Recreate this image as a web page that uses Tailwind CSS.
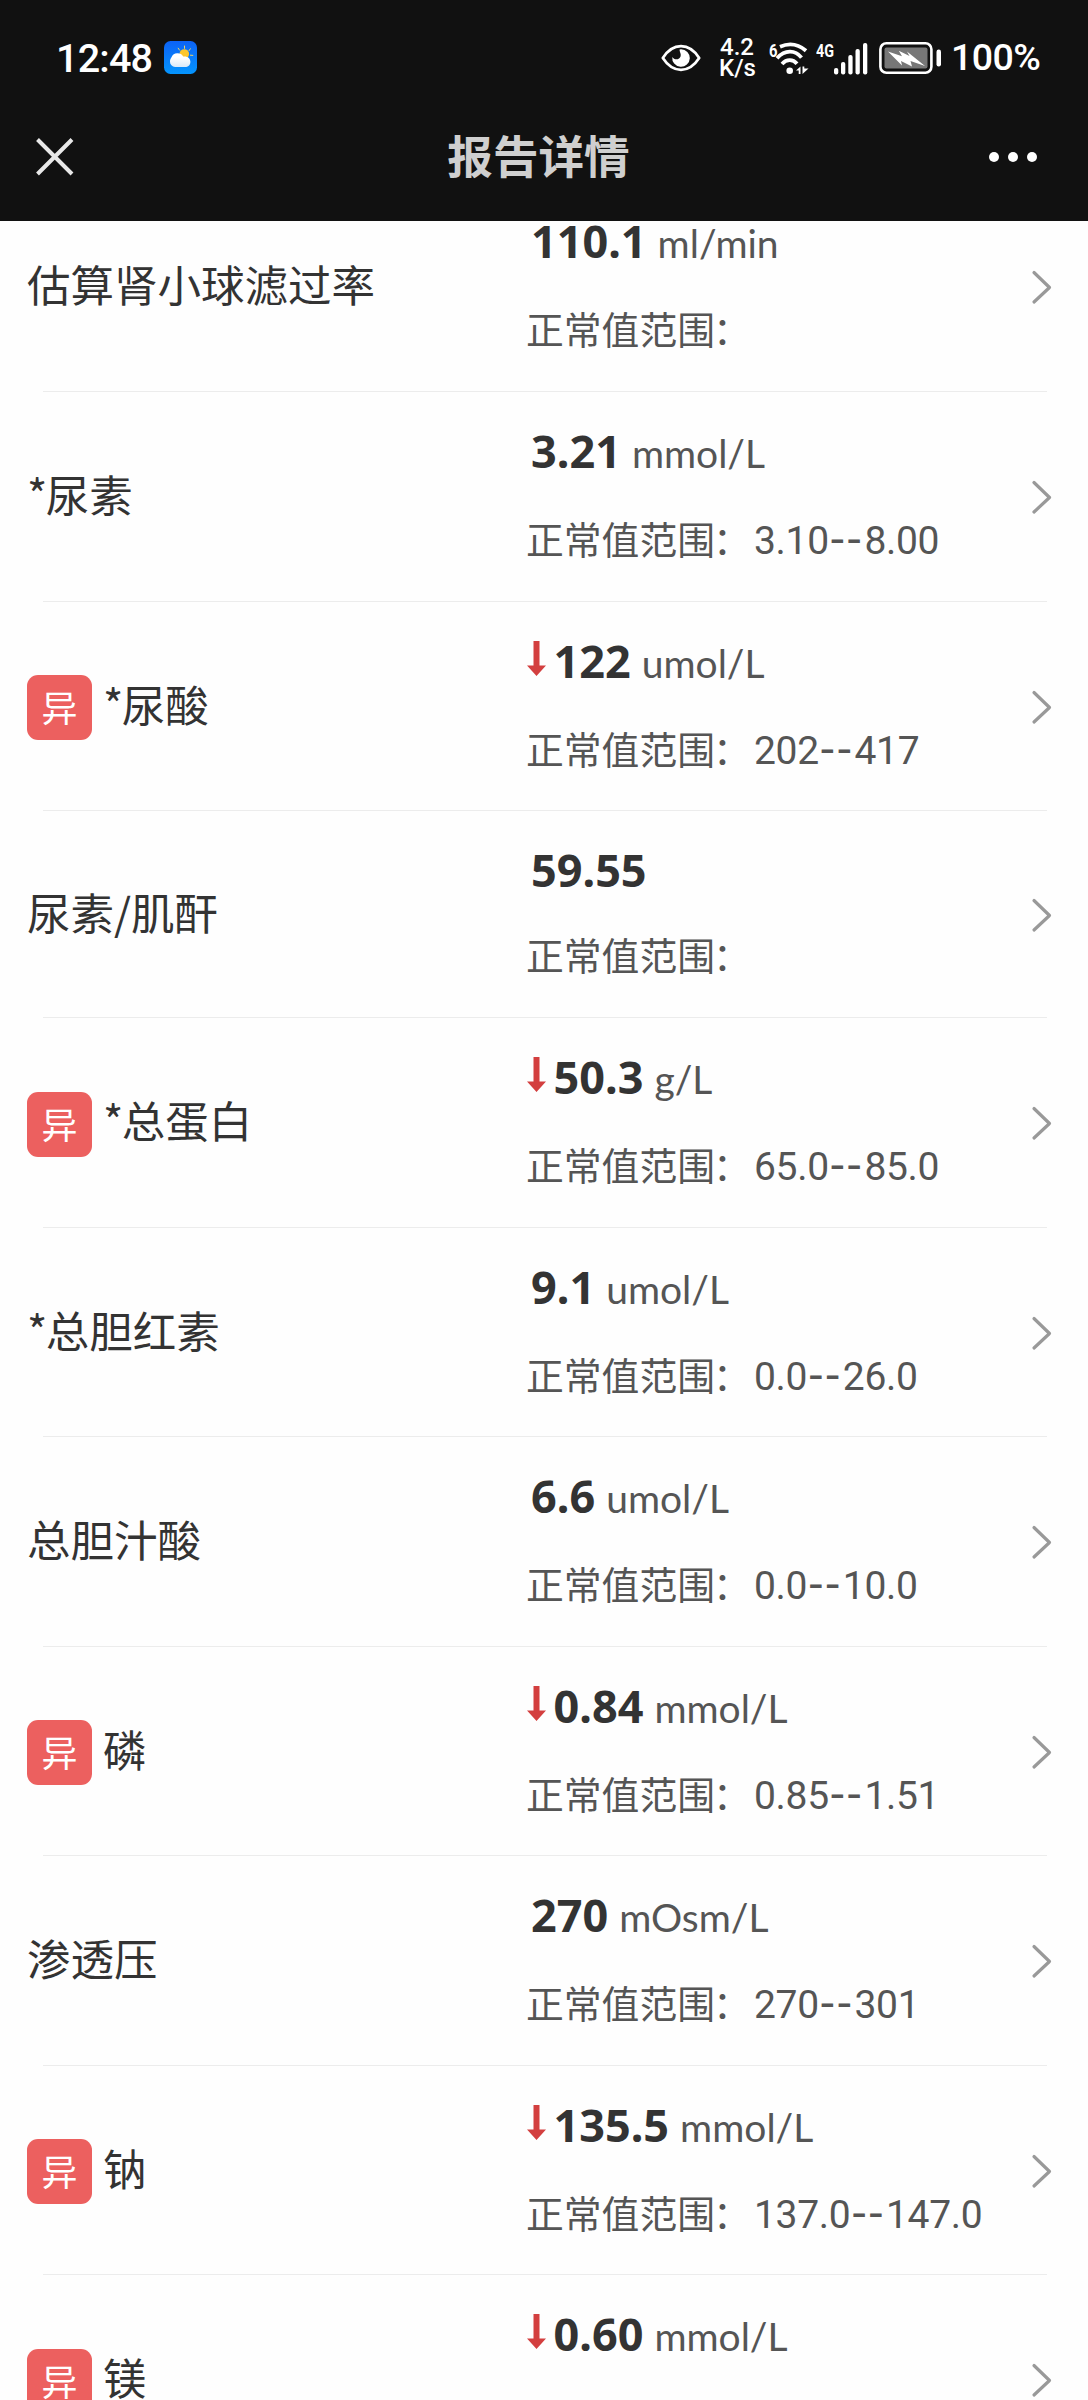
<!DOCTYPE html>
<html lang="zh-CN">
<head>
<meta charset="utf-8">
<title>报告详情</title>
<script src="https://cdn.jsdelivr.net/npm/@tailwindcss/browser@4"></script>
</head>
<body class="w-[1088px] h-[2400px] overflow-hidden bg-[#fefefe] flex flex-col font-['Roboto','Noto_Sans_CJK_SC',sans-serif]">
<header class="h-[221px] shrink-0 bg-[#111111] flex flex-col text-white">
  <div class="h-[114px] shrink-0 flex items-center pl-[56px] pr-[48px] pt-px">
    <span class="w-[108px] pt-[2px] text-[39.5px] leading-none font-medium tracking-[-0.8px] whitespace-nowrap">12:48</span>
    <svg class="w-[33px] h-[33px]" viewBox="0 0 33 33">
      <defs>
        <linearGradient id="sky" x1="0" y1="0" x2="0" y2="1"><stop offset="0" stop-color="#0c62f5"/><stop offset="1" stop-color="#0495fe"/></linearGradient>
        <linearGradient id="cloud" x1="0" y1="0" x2="0" y2="1"><stop offset="0.3" stop-color="#ffffff"/><stop offset="1" stop-color="#d9e9f8"/></linearGradient>
      </defs>
      <rect width="33" height="33" rx="6.5" fill="url(#sky)"/>
      <circle cx="20.3" cy="13" r="4.8" fill="#fcc62c"/>
      <path d="M20.5 5v2.4M14.2 7.2l1.3 1.9M26.3 7.8l-1.2 1.8M28.8 14.4l-2.4-.2" stroke="#e9d36c" stroke-width="1" stroke-linecap="round"/>
      <path d="M11 26a5.2 5.2 0 0 1-5-5.3c0-2 .6-3.400 1.500-4.500A6.600 6.600 0 0 1 19.200 15.500c4.300-.6 7.200 1.800 7.200 5.200S24 26 21.200 26z" fill="url(#cloud)"/>
    </svg>
    <div class="ml-auto flex items-center">
      <svg class="w-[40px] h-[28px]" viewBox="0 0 40 28" fill="none">
        <path d="M1.800 14C7 6 13 2.200 20 2.200S33 6 38.200 14C33 22 27 25.800 20 25.800S7 22 1.800 14z" stroke="#fff" stroke-width="2.700" stroke-linejoin="round"/>
        <path d="M20 5.200a8.800 8.800 0 1 1-8.700 7.700c1 1.700 2.600 2.500 4.300 2.400 3.100-.2 4.700-2.900 3.900-5.900-.4-1.500-1-2.700-.9-4z" fill="#fff"/>
      </svg>
      <div class="ml-[18px] w-[36px] flex flex-col text-[24px] leading-[21px] font-medium">
        <span class="pl-px">4.2</span><span>K/s</span>
      </div>
      <svg class="ml-[14px] w-[42px] h-[36px]" viewBox="0 0 42 36" fill="none">
        <text x="0" y="16.500" font-size="19" font-weight="700" fill="#fff" textLength="8.500" lengthAdjust="spacingAndGlyphs">6</text>
        <g stroke="#fff" stroke-width="3.800" stroke-linecap="butt">
          <path d="M11 6.800C20 2.800 29 4 37 10.800"/>
          <path d="M8 18.200C16 9.600 26 9.600 32.500 17.600"/>
          <path d="M13 24C17.500 19 24 19 28 23.800"/>
        </g>
        <circle cx="20.700" cy="30.800" r="3.300" fill="#fff"/>
        <path d="M27 30.500l4.500-4v7.500h-1.800v-3.500zM33.500 26.500v7.500l6-5.500h-4.200v-2z" fill="#fff"/>
      </svg>
      <svg class="ml-[5px] w-[54px] h-[36px]" viewBox="0 0 54 36" fill="#fff">
        <text x="0" y="17" font-size="19" font-weight="700" textLength="18" lengthAdjust="spacingAndGlyphs">4G</text>
        <rect x="18" y="28" width="4.300" height="6.500" rx="2"/>
        <rect x="25" y="22" width="4.300" height="12.500" rx="2"/>
        <rect x="32.300" y="15" width="4.300" height="19.500" rx="2"/>
        <rect x="39.500" y="9" width="4.300" height="25.500" rx="2"/>
        <rect x="47" y="3" width="4.300" height="31.500" rx="2"/>
      </svg>
      <svg class="ml-[9px] w-[64px] h-[34px]" viewBox="0 0 64 34" fill="none">
        <rect x="1.400" y="2.200" width="51" height="29.600" rx="6" stroke="#fff" stroke-width="2.600"/>
        <rect x="5.500" y="6.500" width="43" height="21" rx="2" fill="#777"/>
        <path d="M9 10.500l14 4.800-3.200-5.600L30.500 15l-2.500-4.500 18 14.500-14.500-5 1.500 5.500-11-5.500 1 4.500z" fill="#fff"/>
        <rect x="57.500" y="8.500" width="4.500" height="17" rx="2.200" fill="#fff"/>
      </svg>
      <span class="ml-[8px] w-[89px] pt-px text-[37.500px] leading-none font-medium tracking-[-0.600px] whitespace-nowrap">100%</span>
    </div>
  </div>
  <div class="h-[85px] shrink-0 grid grid-cols-[1fr_auto_1fr] items-center px-[34px]">
    <svg class="w-[42px] h-[42px]" viewBox="0 0 42 42"><path d="M3.500 3.500L38 38M38 3.500L3.500 38" stroke="#e8e8e8" stroke-width="4"/></svg>
    <h1 class="pt-[4px] pr-[11px] text-[45.600px] leading-[60px] font-bold text-[#cfcfcf]">报告详情</h1>
    <div class="flex justify-end gap-[9px] pr-[17px]">
      <i class="w-[10px] h-[10px] rounded-full bg-white"></i><i class="w-[10px] h-[10px] rounded-full bg-white"></i><i class="w-[10px] h-[10px] rounded-full bg-white"></i>
    </div>
  </div>
</header>
<main class="flex-1 min-h-0 overflow-hidden">
  <ul id="list" class="-mt-[39px] flex flex-col"></ul>
</main>
<script>
// name, value, unit, range, row height, abnormal (low)
const items = [
  ['估算肾小球滤过率', '110.1', 'ml/min', '', 210, false],
  ['*尿素', '3.21', 'mmol/L', '3.10--8.00', 210, false],
  ['*尿酸', '122', 'umol/L', '202--417', 209, true],
  ['尿素/肌酐', '59.55', '', '', 207, false],
  ['*总蛋白', '50.3', 'g/L', '65.0--85.0', 210, true],
  ['*总胆红素', '9.1', 'umol/L', '0.0--26.0', 209, false],
  ['总胆汁酸', '6.6', 'umol/L', '0.0--10.0', 210, false],
  ['磷', '0.84', 'mmol/L', '0.85--1.51', 209, true],
  ['渗透压', '270', 'mOsm/L', '270--301', 210, false],
  ['钠', '135.5', 'mmol/L', '137.0--147.0', 209, true],
  ['镁', '0.60', 'mmol/L', '0.61--1.08', 210, true],
];
const badge = '<span class="w-[65px] h-[65px] mr-[11px] mt-[2px] shrink-0 rounded-[11px] bg-[#ec605f] text-white text-[36px] leading-[62px] text-center font-[\'Noto_Sans_CJK_SC\']">异</span>';
const arrow = '<svg class="w-[19px] h-[35px] mr-[8px] self-start mt-[7px]" viewBox="0 0 19 35"><path d="M6.500 0h6v24.500H19L9.500 35 0 24.500h6.500z" fill="#d33f3f"/></svg>';
document.getElementById('list').innerHTML = items.map(([name, val, unit, range, h, low]) => `
  <li class="relative shrink-0 flex items-center" style="height:${h}px">
    <div class="w-[526px] shrink-0 flex items-center pl-[27px]">
      ${low ? badge : ''}<span class="pb-[6px] text-[43.500px] leading-[60px] text-[#333] font-['Noto_Sans_CJK_SC'] whitespace-nowrap">${name.replace('*', '<span class="tracking-[-1.5px]">*</span>')}</span>
    </div>
    <div class="h-full flex-1 flex flex-col pt-[32px]">
      <div class="${unit ? 'h-[87px]' : 'h-[84px]'} flex items-start whitespace-nowrap ${low ? 'pl-[0.5px]' : 'pl-[5px]'}">
        ${low ? arrow : ''}<div class="text-[#333] text-[45px] font-bold font-['Noto_Sans'] leading-[54px]">${val}<span class="ml-[11px] text-[39px] font-normal font-['Lato'] text-[#555]">${unit}</span></div>
      </div>
      <div class="flex items-baseline whitespace-nowrap leading-[54px] text-[#555] text-[39px]">
        <span class="w-[228px] text-[37.800px] font-['Noto_Sans_CJK_SC']">正常值范围<span class="-ml-[2px]">：</span></span>
        <span class="tracking-[-0.300px]">${range.replace('--', '<span class="inline-block translate-y-[2px] pl-[2px] font-[\'DejaVu_Sans\'] text-[48px] leading-none tracking-[3.5px]">--</span>')}</span>
      </div>
    </div>
    <svg class="w-[22px] h-[36px] mr-[35px] shrink-0" viewBox="0 0 22 36" fill="none"><path d="M3 3.500L18.500 18.500 3 33" stroke="#999" stroke-width="3.200" stroke-linecap="round" stroke-linejoin="round"/></svg>
    <div class="absolute left-[43px] right-[41px] bottom-0 h-px bg-[#ececec]"></div>
  </li>`).join('');
</script>
</body>
</html>
